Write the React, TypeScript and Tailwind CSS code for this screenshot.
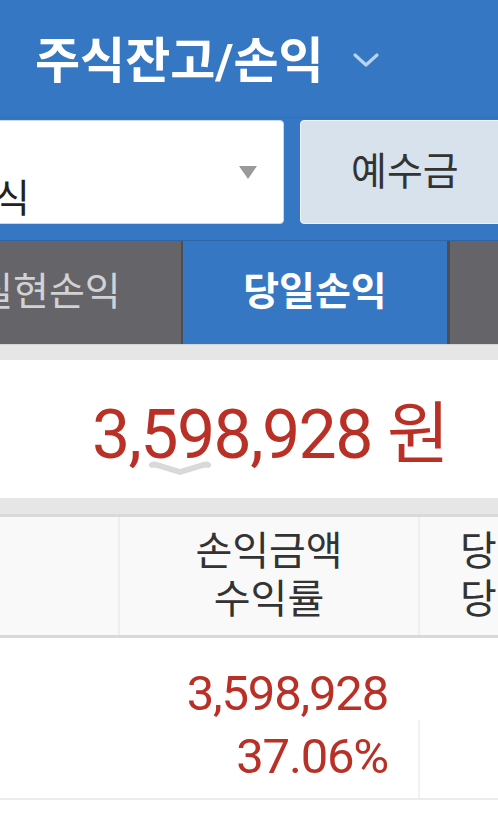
const font = { fontFamily: '"Roboto", "Noto Sans CJK KR", sans-serif' };

const Chevron = ({ className }: { className?: string }) => (
  <svg viewBox="0 0 28 18" className={className} fill="none">
    <path d="M3 4 L14 14 L25 4" stroke="currentColor" strokeWidth="3.2" strokeLinecap="round" strokeLinejoin="round" />
  </svg>
);

export default function App() {
  return (
    <div style={font} className="w-[498px] h-[829px] overflow-hidden bg-white">
      {/* top bar */}
      <header className="h-[118px] bg-[#3677c3] flex items-center pl-[35px] border-b border-[#3470b9]">
        <h1 className="text-[49px] font-bold text-white leading-none mt-[6px]">주식잔고/손익</h1>
        <Chevron className="w-[28px] h-[18px] ml-[28px] mt-[2px] text-[#b9d3f0]" />
      </header>

      {/* filters */}
      <div className="bg-[#3677c3] pt-[2px] pb-[16px] flex gap-[16px] overflow-hidden">
        <div className="shrink-0 w-[300px] -ml-[16px] h-[104px] bg-white rounded-[4px] border border-[#c9d6e6] relative">
          <span className="absolute left-[-27px] top-[78px] -translate-y-1/2 text-[39px] text-[#222] leading-none">주식</span>
          <span className="absolute right-[26px] top-[45px] w-0 h-0 border-l-[9px] border-r-[9px] border-t-[13px] border-l-transparent border-r-transparent border-t-[#9a9a9a]" />
        </div>
        <button className="shrink-0 w-[240px] h-[104px] bg-[#d8e2ec] rounded-[4px] border border-[#eef3f8] flex items-center pl-[50px]">
          <span className="text-[39px] text-[#333] leading-none">예수금</span>
        </button>
      </div>

      {/* tabs */}
      <div className="h-[104px] flex -ml-[83px] border-t border-[#2e65a6] bg-[#4d4e53]">
        <div className="shrink-0 w-[264px] bg-[#656469] flex items-center justify-center">
          <span className="text-[39px] text-[#d2d2d4] leading-none">실현손익</span>
        </div>
        <div className="shrink-0 w-[2px] bg-[#4d4e53]" />
        <div className="shrink-0 w-[264px] bg-[#3677c3] flex items-center justify-center">
          <span className="text-[39px] font-bold text-white leading-none">당일손익</span>
        </div>
        <div className="shrink-0 w-[3px] bg-[#4d4e53]" />
        <div className="shrink-0 w-[264px] bg-[#656469]" />
      </div>

      <div className="h-[16px] bg-[#e6e6e6] border-t border-[#d4d4d4]" />

      {/* total */}
      <section className="h-[138px] bg-white flex items-center justify-end pr-[50px] relative">
        <span className="text-[68px] text-[#b93126] leading-none tracking-[-1.6px] mt-[12px]">3,598,928 원</span>
        <svg viewBox="0 0 62 18" className="absolute left-[149px] top-[100px] w-[62px] h-[18px]" fill="none">
          <path d="M3 5 Q4 4 8 5 L31 12 L54 5 Q58 4 59 5" stroke="#d9d9d9" strokeWidth="6" strokeLinecap="round" strokeLinejoin="round" />
        </svg>
      </section>

      <div className="h-[16px] bg-[#e6e6e6]" />

      {/* table header */}
      <div className="h-[124px] bg-[#f9f9f9] border-t-[3px] border-b-[3px] border-[#d9d9d9] flex">
        <div className="w-[118px] shrink-0" />
        <div className="w-[2px] bg-[#eeeeee]" />
        <div className="w-[298px] shrink-0 flex flex-col items-center justify-center text-[40px] leading-[48px] text-[#333]">
          <span>손익금액</span>
          <span>수익률</span>
        </div>
        <div className="w-[2px] bg-[#eeeeee]" />
        <div className="flex flex-col justify-center pl-[40px] text-[40px] leading-[48px] text-[#333]">
          <span>당</span>
          <span>당</span>
        </div>
      </div>

      {/* data row */}
      <div className="h-[162px] bg-white border-b-[2px] border-[#ececec] flex">
        <div className="w-[120px] shrink-0" />
        <div className="w-[298px] shrink-0 flex flex-col items-end justify-center pr-[30px] pt-[14px] text-[49px] leading-[63px] text-[#b93126] tracking-[-1.2px]">
          <span>3,598,928</span>
          <span>37.06%</span>
        </div>
        <div className="flex flex-col">
          <div className="h-[82px]" />
          <div className="flex-1 w-[2px] bg-[#f1f1f1]" />
        </div>
      </div>
    </div>
  );
}
